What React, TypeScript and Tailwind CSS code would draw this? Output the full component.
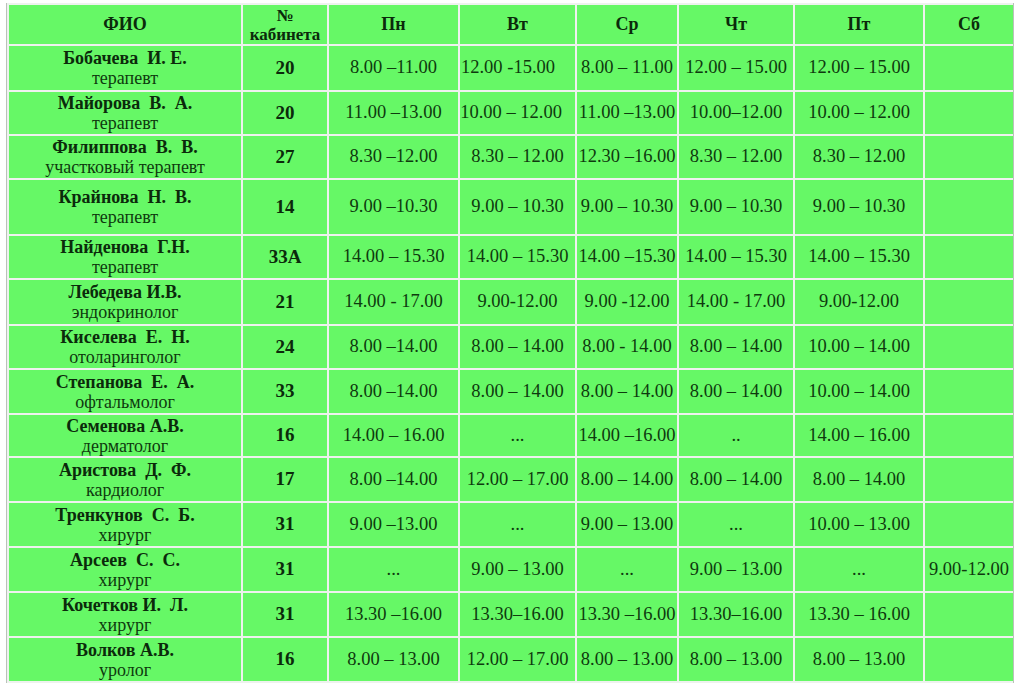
import React from "react";

type Row = { name: string; role: string; room: string; days: string[] };

const rows: Row[] = [
  { name: "Бобачева  И. Е.", role: "терапевт", room: "20", days: ["8.00 –11.00", "12.00 -15.00", "8.00 – 11.00", "12.00 – 15.00", "12.00 – 15.00", ""] },
  { name: "Майорова  В.  А.", role: "терапевт", room: "20", days: ["11.00 –13.00", "10.00 – 12.00", "11.00 –13.00", "10.00–12.00", "10.00 – 12.00", ""] },
  { name: "Филиппова  В.  В.", role: "участковый терапевт", room: "27", days: ["8.30 –12.00", "8.30 – 12.00", "12.30 –16.00", "8.30 – 12.00", "8.30 – 12.00", ""] },
  { name: "Крайнова  Н.  В.", role: "терапевт", room: "14", days: ["9.00 –10.30", "9.00 – 10.30", "9.00 – 10.30", "9.00 – 10.30", "9.00 – 10.30", ""] },
  { name: "Найденова  Г.Н.", role: "терапевт", room: "33А", days: ["14.00 – 15.30", "14.00 – 15.30", "14.00 –15.30", "14.00 – 15.30", "14.00 – 15.30", ""] },
  { name: "Лебедева И.В.", role: "эндокринолог", room: "21", days: ["14.00 - 17.00", "9.00-12.00", "9.00 -12.00", "14.00 - 17.00", "9.00-12.00", ""] },
  { name: "Киселева  Е.  Н.", role: "отоларинголог", room: "24", days: ["8.00 –14.00", "8.00 – 14.00", "8.00 - 14.00", "8.00 – 14.00", "10.00 – 14.00", ""] },
  { name: "Степанова  Е.  А.", role: "офтальмолог", room: "33", days: ["8.00 –14.00", "8.00 – 14.00", "8.00 – 14.00", "8.00 – 14.00", "10.00 – 14.00", ""] },
  { name: "Семенова А.В.", role: "дерматолог", room: "16", days: ["14.00 – 16.00", "...", "14.00 –16.00", "..", "14.00 – 16.00", ""] },
  { name: "Аристова  Д.  Ф.", role: "кардиолог", room: "17", days: ["8.00 –14.00", "12.00 – 17.00", "8.00 – 14.00", "8.00 – 14.00", "8.00 – 14.00", ""] },
  { name: "Тренкунов  С.  Б.", role: "хирург", room: "31", days: ["9.00 –13.00", "...", "9.00 – 13.00", "...", "10.00 – 13.00", ""] },
  { name: "Арсеев  С.  С.", role: "хирург", room: "31", days: ["...", "9.00 – 13.00", "...", "9.00 – 13.00", "...", "9.00-12.00"] },
  { name: "Кочетков И.  Л.", role: "хирург", room: "31", days: ["13.30 –16.00", "13.30–16.00", "13.30 –16.00", "13.30–16.00", "13.30 – 16.00", ""] },
  { name: "Волков А.В.", role: "уролог", room: "16", days: ["8.00 – 13.00", "12.00 – 17.00", "8.00 – 13.00", "8.00 – 13.00", "8.00 – 13.00", ""] },
];

const headers = ["Пн", "Вт", "Ср", "Чт", "Пт", "Сб"];

const cell = "bg-[#66f866] flex items-center justify-center text-center";

function shiftFor(row: number, col: number): string {
  if (col === 1 && row === 0) return "pr-[19px]";
  if (col === 1 && row === 1) return "pr-[13px]";
  return "";
}

export default function App() {
  return (
    <div
      className="w-[1024px] h-[684px] bg-white overflow-hidden pt-[3px] pl-[6px]"
      style={{ fontFamily: '"Liberation Serif", "Times New Roman", serif' }}
    >
      <div
        className="grid w-[1008px] gap-[2px] p-[2px] bg-[#eef2ee] border-l border-r border-[#b9c2b9] grid-cols-[232px_84px_129px_115px_100px_114px_128px_88px] grid-rows-[39px_44px_42px_42px_54px_42px_44px_42px_43px_41px_43px_43px_43px_43px_43px] text-[#0e3a0e]"
      >
        <div className={`${cell} font-bold text-[18px] text-[#0b2a0b]`}>ФИО</div>
        <div className={`${cell} flex-col font-bold text-[17px] leading-[19px] text-[#0b2a0b]`}>
          <span>№</span>
          <span>кабинета</span>
        </div>
        {headers.map((h) => (
          <div key={h} className={`${cell} font-bold text-[18px] text-[#0b2a0b]`}>
            {h}
          </div>
        ))}
        {rows.map((r, i) => (
          <React.Fragment key={i}>
            <div className={`${cell} flex-col leading-[20px] whitespace-pre`}>
              <span className="font-bold text-[18px] text-[#0b2a0b]">{r.name}</span>
              <span className="text-[18px]">{r.role}</span>
            </div>
            <div className={`${cell} font-bold text-[19px] text-[#0b2a0b]`}>{r.room}</div>
            {r.days.map((d, j) => (
              <div key={j} className={`${cell} ${shiftFor(i, j)} text-[18.5px] whitespace-nowrap`}>
                {d}
              </div>
            ))}
          </React.Fragment>
        ))}
      </div>
    </div>
  );
}
